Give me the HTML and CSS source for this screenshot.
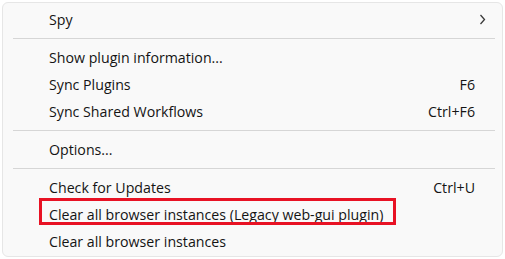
FILE: index.html
```html
<!DOCTYPE html>
<html>
<head>
<meta charset="utf-8">
<link rel="stylesheet" href="styles.css">
</head>
<body>
<div class="menu">
  <div class="item item-sub"><span class="label">Spy</span><svg class="chev" width="7" height="11" viewBox="0 0 7 11"><path d="M1.5 1 L5.5 5.5 L1.5 10" fill="none" stroke="#3a3a3a" stroke-width="1.3"/></svg></div>
  <div class="sep"></div>
  <div class="item"><span class="label">Show plugin information...</span></div>
  <div class="item"><span class="label">Sync Plugins</span><span class="key">F6</span></div>
  <div class="item"><span class="label">Sync Shared Workflows</span><span class="key">Ctrl+F6</span></div>
  <div class="sep"></div>
  <div class="item"><span class="label">Options...</span></div>
  <div class="sep"></div>
  <div class="item"><span class="label">Check for Updates</span><span class="key">Ctrl+U</span></div>
  <div class="item item-marked"><span class="label">Clear all browser instances (Legacy web-gui plugin)</span></div>
  <div class="item"><span class="label">Clear all browser instances</span></div>
</div>
</body>
</html>
```
FILE: styles.css
```css
html, body {
  margin: 0;
  padding: 0;
  background: #ffffff;
}
body {
  font-family: "Open Sans", "Noto Sans", sans-serif;
  font-size: 14.2px;
  color: #141414;
}
.menu {
  margin: 2px;
  height: 255px;
  box-sizing: border-box;
  border: 1px solid #e6e6e6;
  border-radius: 6px;
  background: #f9f9f9;
  padding: 3px 0 1px 0;
}
.item {
  position: relative;
  display: flex;
  align-items: center;
  height: 27px;
  line-height: 27px;
  padding: 0 27px 0 46px;
  white-space: nowrap;
}
.item-sub {
  padding-right: 16px;
}
.label {
  flex: 1;
}
.key {
  flex: none;
}
.chev {
  flex: none;
  display: block;
}
.sep {
  height: 1px;
  background: #d6d6d6;
  margin: 5px 7px 5px 10px;
}
.item-marked::after {
  content: "";
  position: absolute;
  left: 36px;
  top: -3px;
  width: 357px;
  height: 27px;
  box-sizing: border-box;
  border: 3px solid #e81224;
}
```
